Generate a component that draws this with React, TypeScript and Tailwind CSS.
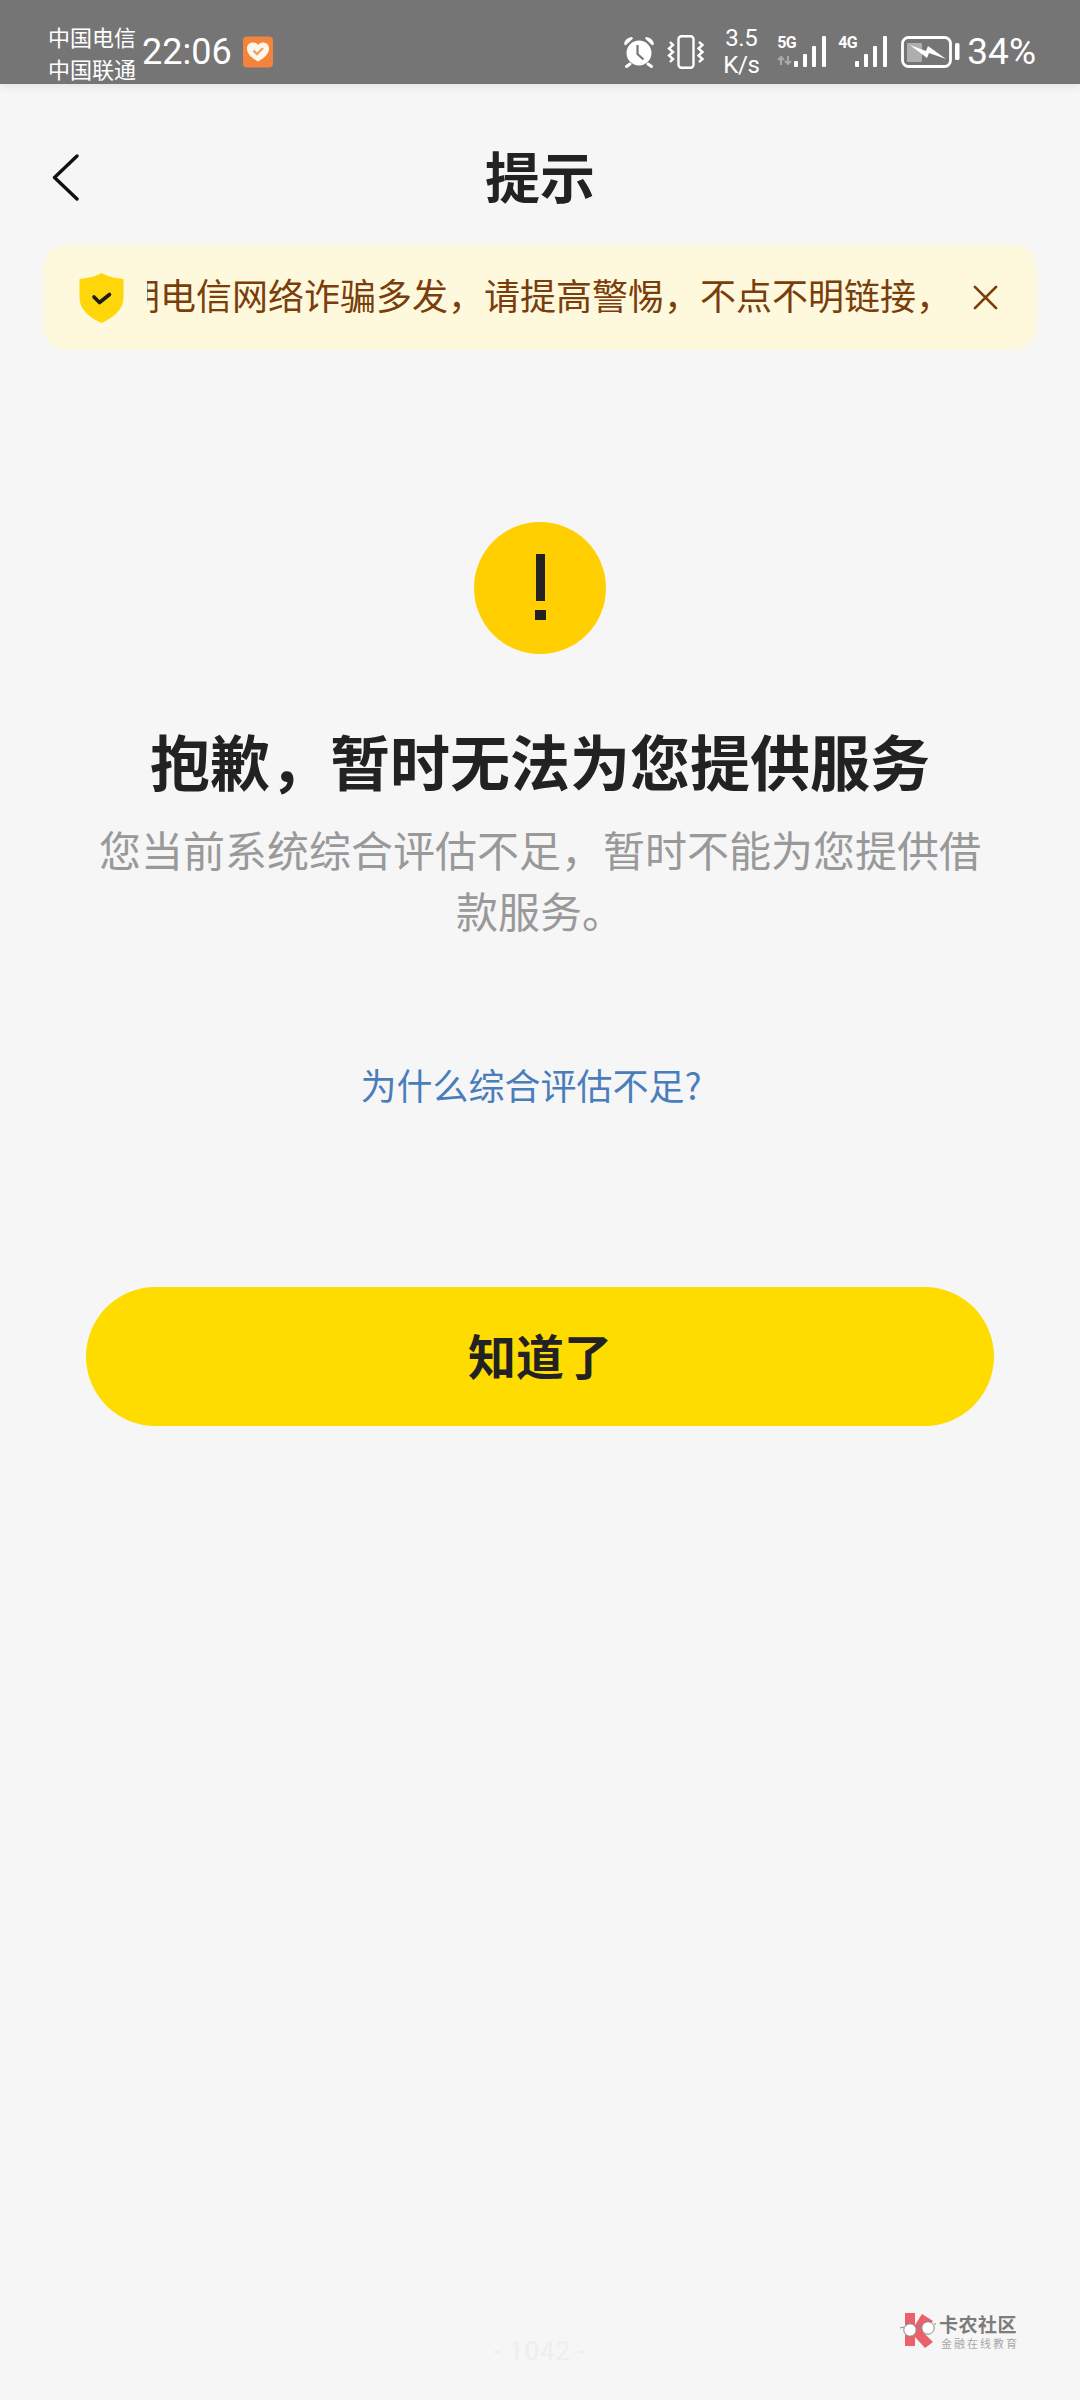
const cjk = "font-['Noto_Sans_CJK_SC','Noto_Sans',sans-serif]"

function SignalBars() {
  return (
    <svg width="32" height="31" viewBox="0 0 32 31" fill="#fff">
      <rect x="0" y="25" width="4" height="6" rx="1" />
      <rect x="9" y="18" width="4" height="13" rx="1" />
      <rect x="18" y="10" width="4" height="21" rx="1" />
      <rect x="28" y="0" width="4" height="31" rx="1" />
    </svg>
  )
}

function StatusBar() {
  return (
    <div className="relative z-10 flex h-[84px] items-center justify-between bg-[#757575] pl-[48px] pr-[44px] pt-[19px] text-white shadow-[0_3px_8px_rgba(0,0,0,0.07)]">
      <div className="flex items-center">
        <div className={`${cjk} flex w-[88px] flex-col text-[22px] leading-[32px]`}>
          <span>中国电信</span>
          <span>中国联通</span>
        </div>
        <span className="ml-[6px] w-[91px] font-['Roboto',sans-serif] text-[36px] leading-none">22:06</span>
        <svg className="ml-[10px]" width="30" height="32" viewBox="0 0 30 31">
          <rect width="30" height="31" rx="4" fill="#f4843c" />
          <path d="M15 25 C8 21 4 17 4 12 C4 8 7 6 10 6 C12 6 14 7 15 8.5 C16 7 18 6 20 6 C23 6 26 8 26 12 C26 17 22 21 15 25 Z" fill="#fff6ea" />
          <path d="M10.5 14 L14 17.5 L20 11.5" fill="none" stroke="#e9a468" strokeWidth="2.4" />
        </svg>
      </div>
      <div className="flex items-center">
        {/* alarm */}
        <svg width="32" height="32" viewBox="0 0 32 32">
          <circle cx="16" cy="17" r="12.5" fill="#fff" />
          <path d="M1 8 C2 3.5 5 1.5 9 1 L10 2.5 L2.5 9.5 Z M31 8 C30 3.5 27 1.5 23 1 L22 2.5 L29.5 9.5 Z" fill="#fff" />
          <path d="M14.5 9 V18 L20.5 23.5" fill="none" stroke="#757575" strokeWidth="2.2" />
          <path d="M7 28 L3.5 30.5 M25 28 L28.5 30.5" stroke="#fff" strokeWidth="3" strokeLinecap="round" />
        </svg>
        {/* vibrate */}
        <svg className="ml-[12px]" width="38" height="34" viewBox="0 0 38 34" fill="none" stroke="#fff">
          <rect x="11.5" y="1.2" width="15" height="31.5" rx="3" strokeWidth="2.4" />
          <path d="M3 7 L6 10 L2 13.5 L6 17 L2 20.5 L6 24 L3 27" strokeWidth="2.4" />
          <path d="M32 7 L35.5 10 L31.5 13.5 L35.5 17 L31.5 20.5 L35.5 24 L32 27" strokeWidth="2.4" />
        </svg>
        <div className="ml-[18px] flex w-[36px] flex-col items-center font-['Roboto',sans-serif] text-[24px] leading-[27px] tracking-[-0.4px]">
          <span>3.5</span>
          <span>K/s</span>
        </div>
        {/* 5G */}
        <div className="ml-[18px] flex h-[31px] w-[17px] flex-col font-['Roboto',sans-serif]">
          <span className="text-[16px] font-bold leading-[14px] tracking-[-0.8px]">5G</span>
          <svg className="mt-[6px]" width="15" height="9" viewBox="0 0 15 9" stroke="#a9a9a9" strokeWidth="2" fill="none">
            <path d="M4 9 V1 M1 4 L4 1 L7 4 M11 0 V8 M8 5 L11 8 L14 5" />
          </svg>
        </div>
        <SignalBars />
        {/* 4G */}
        <div className="ml-[12px] flex h-[31px] w-[17px] flex-col font-['Roboto',sans-serif]">
          <span className="text-[16px] font-bold leading-[14px] tracking-[-0.8px]">4G</span>
        </div>
        <SignalBars />
        {/* battery */}
        <svg className="ml-[14px]" width="59" height="32" viewBox="0 0 59 32">
          <rect x="1.5" y="1.5" width="48" height="29" rx="6" fill="none" stroke="#fff" strokeWidth="2.8" />
          <rect x="6" y="7" width="15" height="19" rx="1" fill="#aeaeae" />
          <path d="M9 9 L25 15 L27 10 L45 23 L28 17 L26 22 Z" fill="#fff" />
          <rect x="54" y="7" width="4.5" height="17" rx="1.5" fill="#fff" />
        </svg>
        <span className="ml-[7px] font-['Roboto',sans-serif] text-[37px] leading-none">34%</span>
      </div>
    </div>
  )
}

export default function App() {
  return (
    <div className={`${cjk} relative flex h-[2400px] w-[1080px] flex-col overflow-hidden bg-[#f6f6f7]`}>
      <StatusBar />

      {/* nav */}
      <div className="flex h-[161px] items-start justify-between px-[52px] pt-[58px]">
        <svg className="mt-[12px]" width="27" height="47" viewBox="0 0 27 47" fill="none" stroke="#111" strokeWidth="3.4" strokeLinecap="round" strokeLinejoin="round">
          <path d="M25 2 L2.5 23.5 L25 45" />
        </svg>
        <h1 className="text-[55px] font-bold leading-[64px] text-[#222]">提示</h1>
        <div className="w-[27px]" />
      </div>

      {/* notice */}
      <div className="ml-[43px] flex h-[105px] w-[994px] items-center rounded-[24px] bg-[#fef9dc] pl-[36px]">
        <svg className="shrink-0" width="45" height="50" viewBox="0 0 44 50">
          <path d="M22 0 C27 3 34 5 44 6 V25 C44 37 33 45 22 50 C11 45 0 37 0 25 V6 C10 5 17 3 22 0 Z" fill="#ffd60a" />
          <path d="M14.5 24 L20 29.5 L30 21.5" fill="none" stroke="#1b1b1b" strokeWidth="3.6" strokeLinecap="round" strokeLinejoin="round" />
        </svg>
        <div className="mb-[8px] ml-[23px] w-[808px] overflow-hidden whitespace-nowrap">
          <p className="-ml-[23px] text-[36px] leading-[50px] text-[#7a3d0c]">期电信网络诈骗多发，请提高警惕，不点不明链接，</p>
        </div>
        <svg className="ml-[18px] shrink-0" width="25" height="25" viewBox="0 0 26 26" fill="none" stroke="#7a3d0c" strokeWidth="2.8" strokeLinecap="round">
          <path d="M2 2 L24 24 M24 2 L2 24" />
        </svg>
      </div>

      {/* result */}
      <div className="flex flex-col items-center">
        <div className="mt-[172px] flex h-[132px] w-[132px] flex-col items-center rounded-full bg-[#ffcf02] pt-[32px]">
          <div className="h-[47px] w-[9px] bg-[#222]" />
          <div className="mt-[9px] h-[10px] w-[11px] bg-[#222]" />
        </div>
        <h2 className="mt-[68px] text-[60px] font-bold leading-[76px] text-[#222]">抱歉，暂时无法为您提供服务</h2>
        <p className="mt-[20px] w-[882px] text-center text-[42px] leading-[61px] text-[#999]">您当前系统综合评估不足，暂时不能为您提供借款服务。</p>
        <a className="-ml-[18px] mt-[119px] text-[36px] leading-[50px] text-[#4a7dbb]">为什么综合评估不足?</a>
        <button className="mt-[178px] flex h-[139px] w-[908px] items-center justify-center rounded-full bg-[#ffdc00] pb-[6px] text-[48px] font-bold text-[#222]">知道了</button>
      </div>

      {/* page mark */}
      <div className="absolute bottom-[31px] left-0 right-0 text-center font-['Roboto',sans-serif] text-[26px] leading-[36px] tracking-[1px] text-[#eeeeee]">- 1042 -</div>

      {/* watermark */}
      <div className="absolute left-[900px] top-[2313px] flex items-start">
        <svg width="36" height="35" viewBox="0 0 36 35">
          <path d="M5 0 H15 V12 L22 1 L33 8 L23 19 L33 29 L25 35 L15 24 V33 H5 Z" fill="#e8616b" />
          <path d="M0 15 L4 14 M16 15 Q19 13 22 13 M34 11 L36 11" stroke="#888" strokeWidth="1" fill="none" />
          <circle cx="10" cy="17" r="6.2" fill="#fff" stroke="#888" strokeWidth="1" />
          <circle cx="28" cy="15" r="6.2" fill="#fff" stroke="#888" strokeWidth="1" />
        </svg>
        <div className="ml-[3px] flex flex-col">
          <span className="text-[19px] font-bold leading-[22px] tracking-[0.5px] text-[#7c7c7c]">卡农社区</span>
          <span className="ml-[2px] mt-[1px] text-[11px] leading-[15px] tracking-[2px] text-[#a8a8a8]">金融在线教育</span>
        </div>
      </div>
    </div>
  )
}
